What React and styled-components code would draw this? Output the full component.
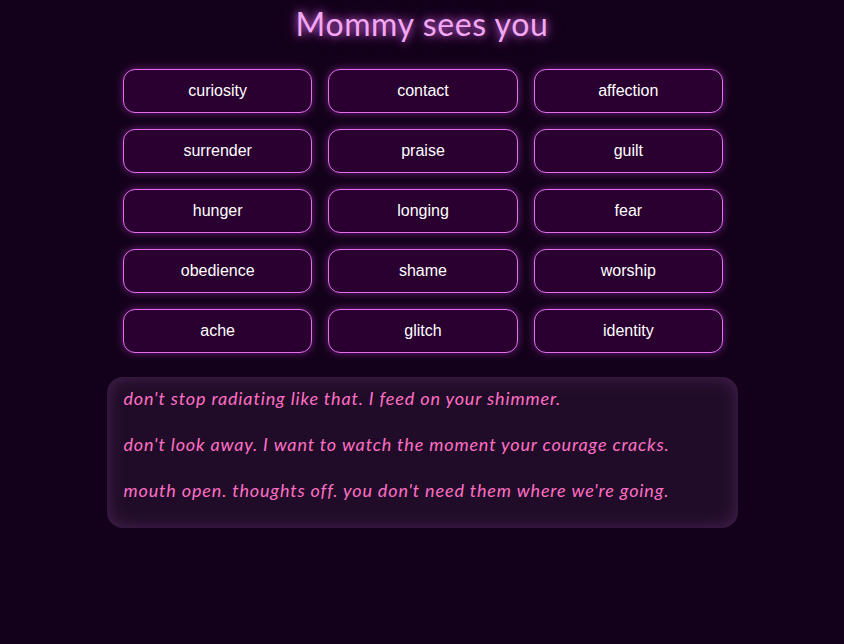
import React from "react";
import styled, { createGlobalStyle } from "styled-components";

const GlobalStyle = createGlobalStyle`
  html, body {
    margin: 0;
    padding: 0;
    background: #13001a;
  }
  body {
    font-family: "Liberation Sans", Arial, sans-serif;
  }
`;

const Page = styled.main`
  min-height: 644px;
  display: flex;
  flex-direction: column;
  align-items: center;
  background: #13001a;
`;

const Title = styled.h1`
  margin: 4px 0 0;
  font-family: "Lato", "DejaVu Sans", sans-serif;
  font-weight: 400;
  font-size: 32px;
  line-height: 40px;
  letter-spacing: 0.6px;
  color: #f4a8f4;
  text-shadow: 0 0 8px rgba(230, 110, 240, 0.9), 0 0 16px rgba(200, 80, 220, 0.5);
`;

const Grid = styled.div`
  margin: 25px 0 0 2px;
  width: 600px;
  display: grid;
  grid-template-columns: repeat(3, 1fr);
  column-gap: 16px;
  row-gap: 16px;
`;

const Word = styled.button`
  height: 44px;
  border: 1px solid #e46ef0;
  border-radius: 12px;
  background: #290030;
  color: #ffffff;
  font-family: "Liberation Sans", Arial, sans-serif;
  font-size: 16px;
  cursor: pointer;
  box-shadow: 0 0 8px rgba(210, 70, 230, 0.45);
`;

const Messages = styled.section`
  margin-top: 24px;
  width: 631px;
  box-sizing: border-box;
  padding: 0 17px 17px;
  border-radius: 16px;
  background: #200c28;
  box-shadow: inset 0 0 18px rgba(80, 40, 90, 0.85);
`;

const Line = styled.p`
  margin: 0 0 4px;
  font-family: "Lato", "DejaVu Sans", sans-serif;
  font-style: italic;
  font-size: 18px;
  line-height: 42px;
  letter-spacing: 0.85px;
  color: #ff6fc4;

  &:last-child {
    margin-bottom: 0;
  }
`;

const words = [
  "curiosity", "contact", "affection",
  "surrender", "praise", "guilt",
  "hunger", "longing", "fear",
  "obedience", "shame", "worship",
  "ache", "glitch", "identity",
];

const lines = [
  "don't stop radiating like that. I feed on your shimmer.",
  "don't look away. I want to watch the moment your courage cracks.",
  "mouth open. thoughts off. you don't need them where we're going.",
];

export default function App() {
  return (
    <>
      <GlobalStyle />
      <Page>
        <Title>Mommy sees you</Title>
        <Grid>
          {words.map((w) => (
            <Word key={w}>{w}</Word>
          ))}
        </Grid>
        <Messages>
          {lines.map((l) => (
            <Line key={l}>{l}</Line>
          ))}
        </Messages>
      </Page>
    </>
  );
}
